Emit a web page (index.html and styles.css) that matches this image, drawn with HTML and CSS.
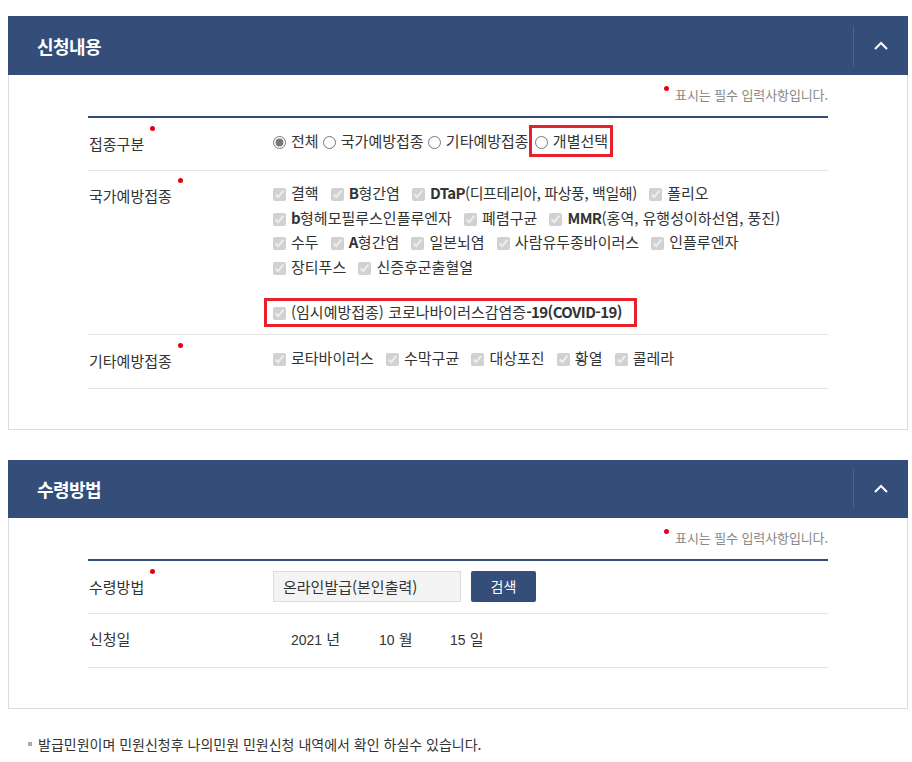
FILE: index.html
```html
<!DOCTYPE html>
<html lang="ko">
<head>
<meta charset="utf-8">
<title>신청내용</title>
<link rel="stylesheet" href="styles.css">
</head>
<body>
<div class="page">
  <section class="panel">
    <div class="panel-head">
      <h2 class="panel-title">신청내용</h2>
      <button class="toggle" type="button" aria-label="접기">
        <svg width="14" height="9" viewBox="0 0 14 9"><polyline points="1,8 7,2 13,8" fill="none" stroke="#fff" stroke-width="2"/></svg>
      </button>
    </div>
    <div class="panel-body">
      <p class="req-note"><span class="req-dot"></span>표시는 필수 입력사항입니다.</p>
      <div class="form">
        <div class="row row-kind">
          <div class="label"><span class="req">접종구분</span></div>
          <div class="field">
            <label class="opt"><input type="radio" name="kind" checked>전체</label>
            <label class="opt"><input type="radio" name="kind">국가예방접종</label>
            <label class="opt"><input type="radio" name="kind">기타예방접종</label>
            <label class="opt mark mark-radio"><input type="radio" name="kind">개별선택</label>
          </div>
        </div>
        <div class="row row-national">
          <div class="label"><span class="req">국가예방접종</span></div>
          <div class="field">
            <div class="line">
              <label class="chk"><input type="checkbox" checked disabled>결핵</label>
              <label class="chk"><input type="checkbox" checked disabled><span class="lat">B</span>형간염</label>
              <label class="chk"><input type="checkbox" checked disabled><span class="lat">DTaP</span><span class="tight">(디프테리아, 파상풍, 백일해)</span></label>
              <label class="chk"><input type="checkbox" checked disabled>폴리오</label>
            </div>
            <div class="line">
              <label class="chk"><input type="checkbox" checked disabled><span class="lat">b</span>형헤모필루스인플루엔자</label>
              <label class="chk"><input type="checkbox" checked disabled>폐렴구균</label>
              <label class="chk"><input type="checkbox" checked disabled><span class="lat">MMR</span>(홍역, 유행성이하선염, 풍진)</label>
            </div>
            <div class="line">
              <label class="chk"><input type="checkbox" checked disabled>수두</label>
              <label class="chk"><input type="checkbox" checked disabled><span class="lat">A</span>형간염</label>
              <label class="chk"><input type="checkbox" checked disabled>일본뇌염</label>
              <label class="chk"><input type="checkbox" checked disabled>사람유두종바이러스</label>
              <label class="chk"><input type="checkbox" checked disabled>인플루엔자</label>
            </div>
            <div class="line">
              <label class="chk"><input type="checkbox" checked disabled>장티푸스</label>
              <label class="chk"><input type="checkbox" checked disabled>신증후군출혈열</label>
            </div>
            <div class="line covid">
              <label class="chk mark mark-covid"><input type="checkbox" checked disabled>(임시예방접종) 코로나바이러스감염증<span class="lat">-19(COVID-19)</span></label>
            </div>
          </div>
        </div>
        <div class="row row-other">
          <div class="label"><span class="req">기타예방접종</span></div>
          <div class="field">
            <div class="line">
              <label class="chk"><input type="checkbox" checked disabled>로타바이러스</label>
              <label class="chk"><input type="checkbox" checked disabled>수막구균</label>
              <label class="chk"><input type="checkbox" checked disabled>대상포진</label>
              <label class="chk"><input type="checkbox" checked disabled>황열</label>
              <label class="chk"><input type="checkbox" checked disabled>콜레라</label>
            </div>
          </div>
        </div>
      </div>
    </div>
  </section>

  <section class="panel">
    <div class="panel-head">
      <h2 class="panel-title">수령방법</h2>
      <button class="toggle" type="button" aria-label="접기">
        <svg width="14" height="9" viewBox="0 0 14 9"><polyline points="1,8 7,2 13,8" fill="none" stroke="#fff" stroke-width="2"/></svg>
      </button>
    </div>
    <div class="panel-body">
      <p class="req-note"><span class="req-dot"></span>표시는 필수 입력사항입니다.</p>
      <div class="form">
        <div class="row row-input">
          <div class="label"><span class="req">수령방법</span></div>
          <div class="field field-inline">
            <input class="text-input" type="text" value="온라인발급(본인출력)" readonly>
            <button class="btn" type="button">검색</button>
          </div>
        </div>
        <div class="row row-date">
          <div class="label">신청일</div>
          <div class="field date">
            <span class="date-part y"><span class="num">2021</span> 년</span>
            <span class="date-part m"><span class="num">10</span> 월</span>
            <span class="date-part d"><span class="num">15</span> 일</span>
          </div>
        </div>
      </div>
    </div>
  </section>

  <p class="foot">발급민원이며 민원신청후 나의민원 민원신청 내역에서 확인 하실수 있습니다.</p>
</div>
</body>
</html>
```

FILE: styles.css
```css
* { box-sizing: border-box; }

body {
  margin: 0;
  font-family: "Noto Sans CJK KR", "Noto Sans", sans-serif;
  color: #333;
  background: #fff;
}

.page {
  padding: 16px 4px 10px 8px;
}

.panel + .panel {
  margin-top: 30px;
}

.panel-head {
  display: flex;
  align-items: center;
  height: 59px;
  background: #344d79;
}

.panel + .panel .panel-head {
  height: 58px;
}

.panel-title {
  flex: 1;
  margin: 0;
  padding-left: 29px;
  font-size: 18px;
  font-weight: 700;
  line-height: 24px;
  color: #fff;
  letter-spacing: -0.6px;
}

.toggle {
  width: 55px;
  height: 40px;
  padding: 0;
  border: 0;
  border-left: 1px solid #4b6390;
  background: transparent;
  display: flex;
  align-items: center;
  justify-content: center;
}

.panel-body {
  border: 1px solid #dcdcdc;
  border-top: 0;
  padding: 11px 79px 40px;
}

.req-note {
  margin: 0 0 12px;
  text-align: right;
  font-size: 13px;
  line-height: 18px;
  color: #888;
  letter-spacing: -0.1px;
}

.req-dot,
.req::after {
  display: inline-block;
  width: 5px;
  height: 5px;
  border-radius: 50%;
  background: #e60012;
  vertical-align: top;
}

.req-dot {
  margin-right: 6px;
}

.req::after {
  content: "";
  margin-left: 6px;
  transform: translateY(-8px);
}

.form {
  border-top: 2px solid #344d79;
}

.row {
  display: grid;
  grid-template-columns: 185px 1fr;
  border-bottom: 1px solid #e5e5e5;
  padding: 11px 0 16px;
}

.label {
  padding: 5px 0 0 1px;
  font-size: 15px;
  line-height: 20px;
  color: #333;
}

.field {
  font-size: 15px;
  line-height: 24px;
  color: #333;
}

.row-national {
  padding: 10px 0 9px;
}

.row-other {
  padding: 11px 0 17px;
}

.line {
  line-height: 24.5px;
  white-space: nowrap;
}

.covid {
  margin-top: 21px;
}

.opt input {
  width: 13px;
  height: 13px;
  margin: 0 5px 0 0;
  vertical-align: -2px;
  accent-color: #777;
}

.chk {
  margin-right: 8px;
}

.chk input {
  width: 13px;
  height: 13px;
  margin: 0 5px 0 0;
  vertical-align: -2px;
}

.lat {
  font-weight: 700;
  letter-spacing: -0.6px;
}

.tight {
  letter-spacing: -0.4px;
}

.mark {
  outline: 3px solid #e8202a;
}

.mark-radio {
  display: inline-block;
  padding: 0 1px 0 2px;
  outline-offset: 1px;
}

.mark-covid {
  display: inline-block;
  padding: 0 13px 0 7px;
  margin-left: -7px;
  outline-offset: -1px;
}

.row-input {
  padding: 10px 0 11px;
}

.row-input .label {
  padding-top: 6px;
}

.field-inline {
  display: flex;
  gap: 10px;
}

.text-input {
  width: 188px;
  height: 31px;
  padding: 0 9px;
  border: 1px solid #dcdcdc;
  background: #f4f4f4;
  font-family: "Noto Sans CJK KR", sans-serif;
  font-size: 15px;
  color: #333;
}

.btn {
  width: 65px;
  height: 31px;
  border: 0;
  border-radius: 2px;
  background: #344d79;
  color: #fff;
  font-family: "Noto Sans CJK KR", sans-serif;
  font-size: 14px;
}

.row-date {
  padding: 14px 0 16px;
}

.row-date .label {
  padding-top: 0;
  line-height: 22px;
}

.date {
  display: flex;
  padding-left: 18px;
  line-height: 22px;
}

.date-part {
  font-size: 15px;
}

.date-part.y { width: 88px; }
.date-part.m { width: 71px; }

.num {
  font-family: "Liberation Sans", Arial, sans-serif;
  font-size: 14px;
}

.foot {
  margin: 25px 0 0 20px;
  font-size: 14px;
  line-height: 20px;
  color: #333;
}

.foot::before {
  content: "";
  display: inline-block;
  width: 4px;
  height: 4px;
  margin-right: 6px;
  background: #aaa;
  vertical-align: 4px;
}
```
